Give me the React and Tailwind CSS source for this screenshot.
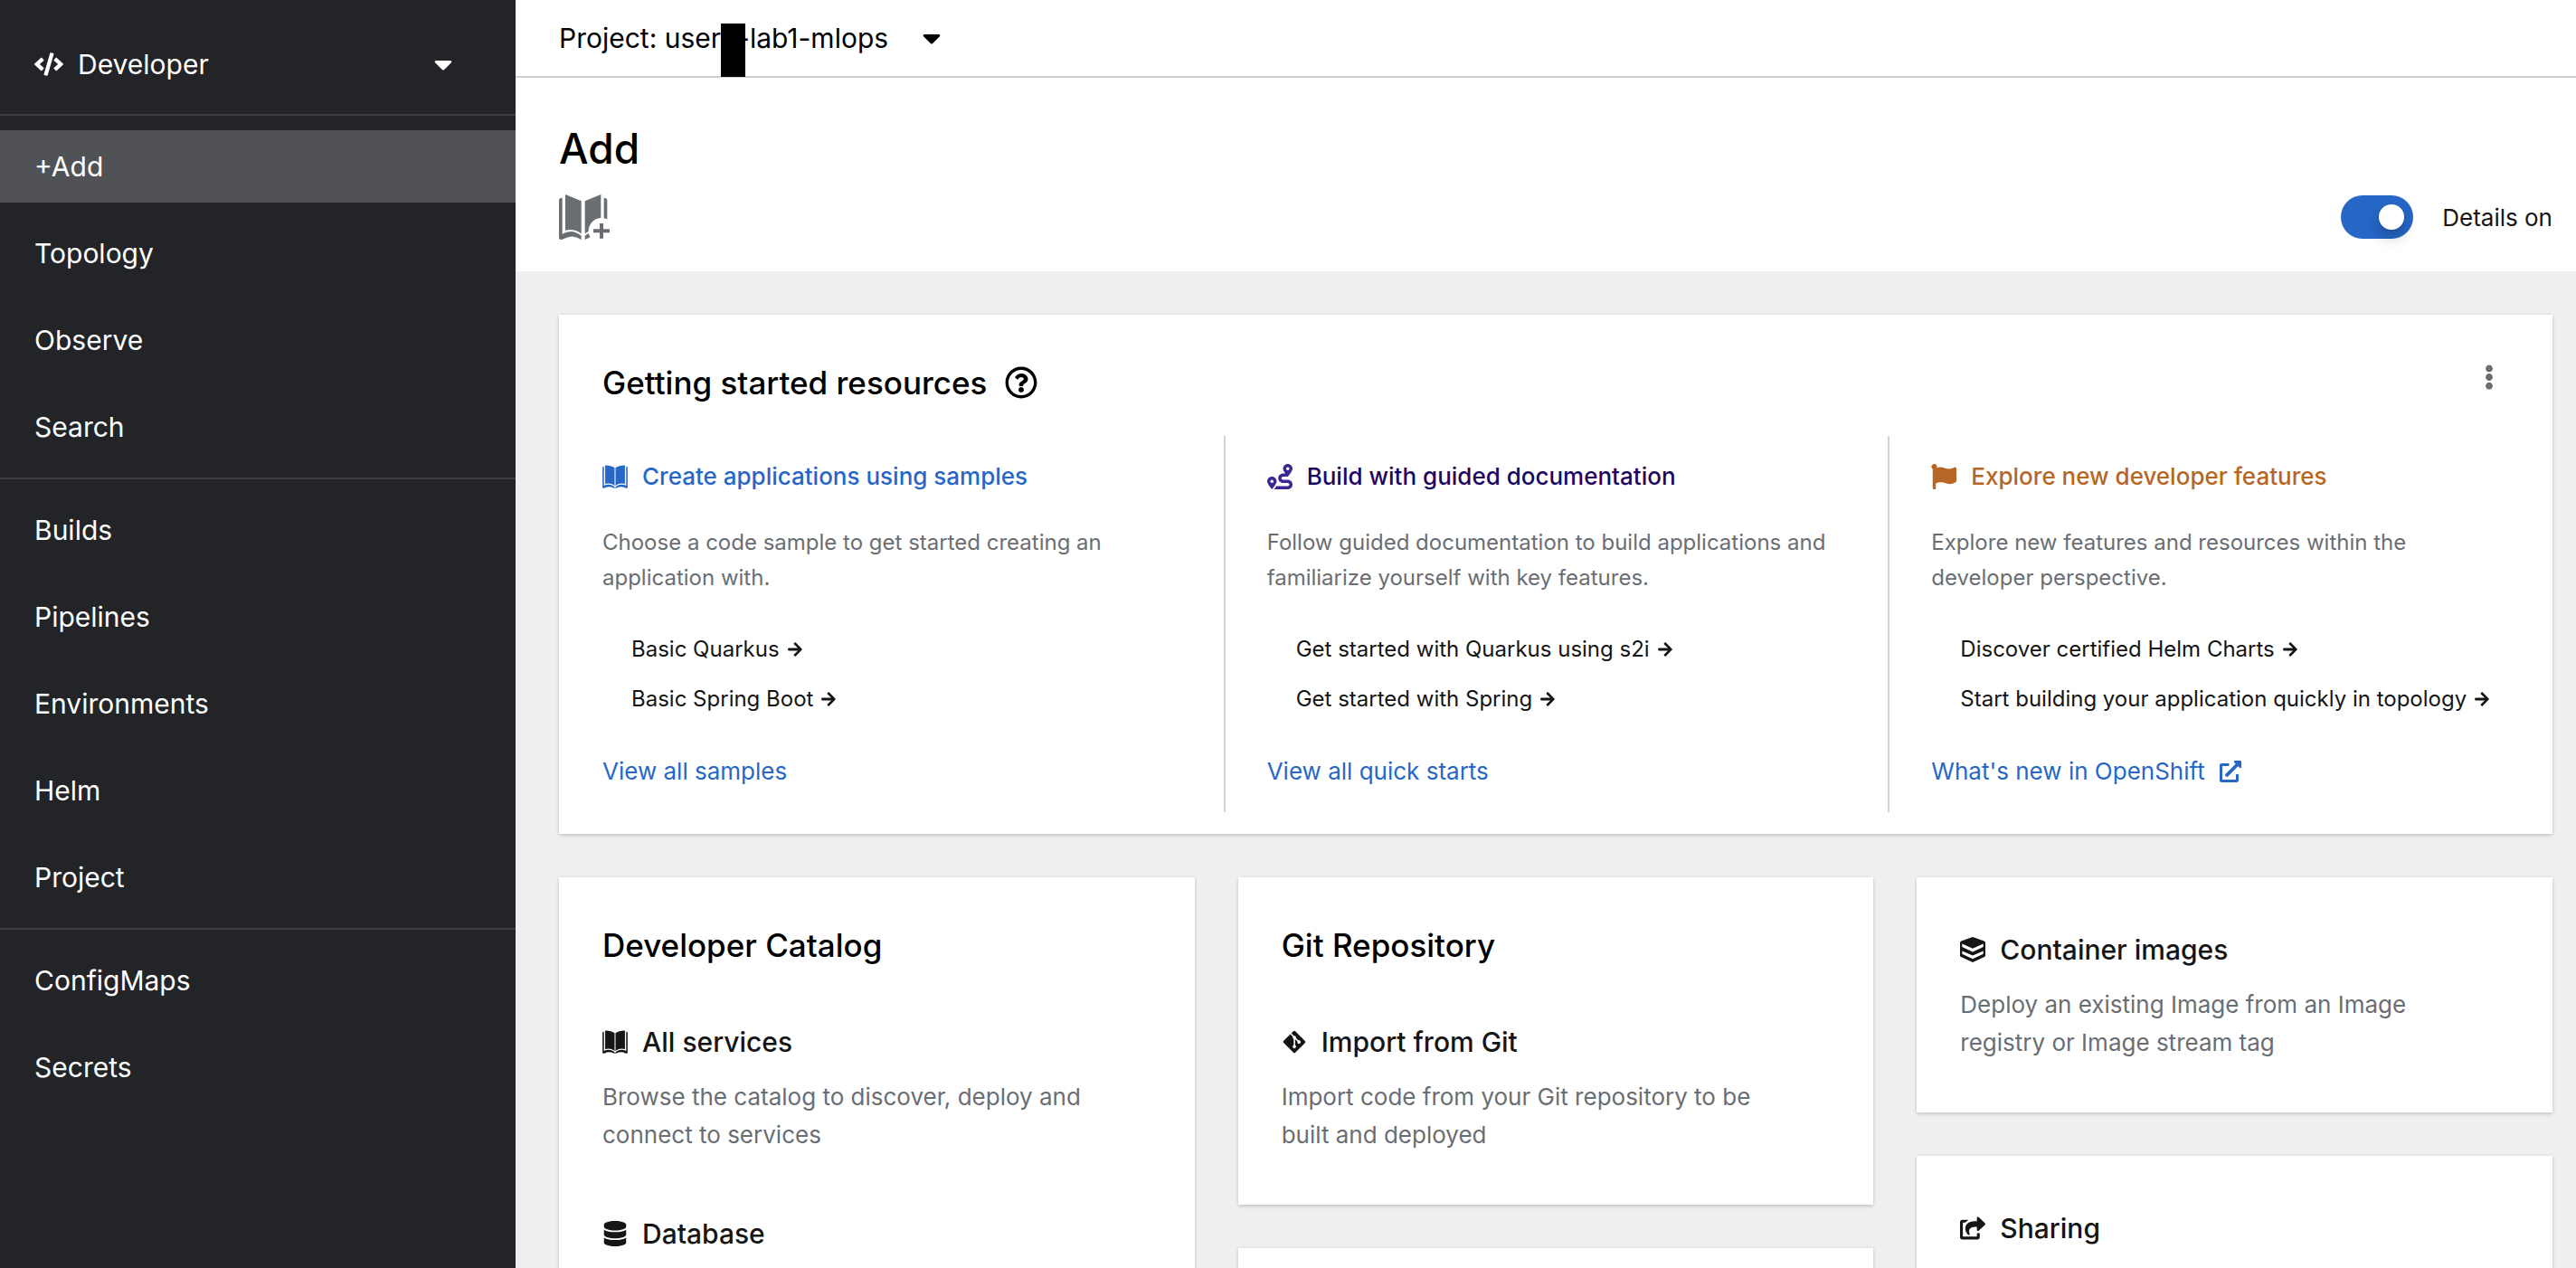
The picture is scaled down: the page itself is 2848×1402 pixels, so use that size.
import React, { useState } from "react";
import {
  FaCode,
  FaCaretDown,
  FaRoute,
  FaFlag,
  FaDatabase,
  FaGitAlt,
  FaShareSquare,
  FaEllipsisV,
  FaArrowRight,
  FaExternalLinkAlt,
  FaRegQuestionCircle,
} from "react-icons/fa";

const BOOK_PAGE = "M21 0 L74 22 V130 Q52 112 21 119 Z";
const BOOK_COVER = "M0 18 Q1 12 11 11 V131 Q44 112 74 137 V150 Q46 130 16 147 Q5 153 0 146 Z";
const SMALL_PAGE = "M17 3 Q50 0 77 18 V132 Q50 112 17 121 Z";
const SMALL_COVER = "M0 16 Q1 10 9 10 V133 Q44 116 77 140 V150 Q46 130 14 147 Q4 152 0 146 Z";

function CatalogIcon({ className }) {
  return (
    <svg viewBox="0 0 160 150" fill="currentColor" className={className} aria-hidden="true">
      <path d={SMALL_PAGE} />
      <path d={SMALL_COVER} />
      <g transform="matrix(-1 0 0 1 160 0)">
        <path d={SMALL_PAGE} />
        <path d={SMALL_COVER} />
      </g>
    </svg>
  );
}

function CatalogAddIcon({ className }) {
  return (
    <svg viewBox="0 0 168 150" fill="currentColor" className={className} aria-hidden="true">
      <mask id="plus-cutout">
        <rect width="168" height="150" fill="white" />
        <circle cx="141" cy="121" r="43" fill="black" />
      </mask>
      <g mask="url(#plus-cutout)">
        <path d={BOOK_PAGE} />
        <path d={BOOK_COVER} />
        <g transform="matrix(-1 0 0 1 160 0)">
          <path d={BOOK_PAGE} />
          <path d={BOOK_COVER} />
        </g>
      </g>
      <path d="M135 96h12v19h21v12h-21v19h-12v-19h-21v-12h21z" />
    </svg>
  );
}

function LayersIcon({ className }) {
  return (
    <svg viewBox="0 0 28 28" className={className} aria-hidden="true">
      <path
        fill="currentColor"
        d="M14 0 L26.6 4.6 Q28 5.2 28 6.6 V20.4 Q28 21.4 27 22 L14 28 L1 22 Q0 21.4 0 20.4 V6.6 Q0 5.2 1.4 4.6 Z"
      />
      <path fill="white" d="M2.3 7.6 L14 12.8 L25.7 7.6 V11 L14 16.4 L2.3 11 Z" />
      <path fill="white" d="M2.3 15.4 L14 20.6 L25.7 15.4 V18.8 L14 24.2 L2.3 18.8 Z" />
    </svg>
  );
}

const NAV_GROUPS = [
  ["+Add", "Topology", "Observe", "Search"],
  ["Builds", "Pipelines", "Environments", "Helm", "Project"],
  ["ConfigMaps", "Secrets"],
];

function Sidebar() {
  return (
    <aside className="w-[570px] shrink-0 bg-[#232428] text-[30px] text-white">
      <button
        type="button"
        className="flex h-32 w-full items-center border-b-2 border-[#3c3d42] pt-4 pr-[70px] pl-[38px] text-left"
      >
        <FaCode className="h-[26px] w-8" />
        <span className="ml-4 flex-1">Developer</span>
        <FaCaretDown className="h-8 w-5" />
      </button>
      <nav className="divide-y-2 divide-[#3c3d42]">
        {NAV_GROUPS.map((group) => (
          <ul key={group[0]} className="flex flex-col gap-4 py-4">
            {group.map((item) => (
              <li key={item}>
                <a
                  href="#"
                  className={
                    item === "+Add"
                      ? "flex h-20 items-center bg-[#515256] pl-[38px]"
                      : "flex h-20 items-center pl-[38px]"
                  }
                >
                  {item}
                </a>
              </li>
            ))}
          </ul>
        ))}
      </nav>
    </aside>
  );
}

function ProjectBar() {
  return (
    <div className="border-b-2 border-[#d2d2d2] bg-white pl-12">
      <button type="button" className="flex h-[84px] items-center text-[30px] text-black">
        <span>Project: user</span>
        <span className="relative h-full w-[18px]">
          <span className="absolute top-[26px] left-0 h-[59px] w-[27px] bg-black" />
        </span>
        <span>-lab1-mlops</span>
        <FaCaretDown className="ml-[38px] h-8 w-5" />
      </button>
    </div>
  );
}

function PageHeader() {
  const [details, setDetails] = useState(true);
  return (
    <header className="bg-white pt-12 pr-[26px] pb-[34px] pl-12">
      <h1 className="text-[46px] leading-[60px] font-medium text-black">Add</h1>
      <div className="mt-5 flex h-[52px] items-center justify-between">
        <CatalogAddIcon className="h-[50px] w-14 text-[#6a6e73]" />
        <label className="flex items-center gap-8 text-[26px] text-[#151515]">
          <input
            type="checkbox"
            role="switch"
            checked={details}
            onChange={(e) => setDetails(e.target.checked)}
            className="flex h-12 w-20 appearance-none items-center rounded-full bg-[#8a8d90] px-[10px] before:size-7 before:rounded-full before:bg-white before:shadow-[0_8px_16px_rgba(0,0,0,0.25)] checked:justify-end checked:bg-[#2667c7]"
          />
          Details on
        </label>
      </div>
    </header>
  );
}

const RESOURCES = [
  {
    title: "Create applications using samples",
    icon: <CatalogIcon className="h-[26px] w-7" />,
    iconColor: "text-[#2667c7]",
    titleColor: "text-[#2667c7]",
    text: "Choose a code sample to get started creating an application with.",
    links: ["Basic Quarkus", "Basic Spring Boot"],
    more: "View all samples",
  },
  {
    title: "Build with guided documentation",
    icon: <FaRoute className="size-7" />,
    iconColor: "text-[#3d2595]",
    titleColor: "text-[#1b0763]",
    text: "Follow guided documentation to build applications and familiarize yourself with key features.",
    links: ["Get started with Quarkus using s2i", "Get started with Spring"],
    more: "View all quick starts",
  },
  {
    title: "Explore new developer features",
    icon: <FaFlag className="size-7" />,
    iconColor: "text-[#b76625]",
    titleColor: "text-[#b76625]",
    text: "Explore new features and resources within the developer perspective.",
    links: ["Discover certified Helm Charts", "Start building your application quickly in topology"],
    more: "What's new in OpenShift",
    external: true,
  },
];

const CARD = "bg-white shadow-[0_2px_4px_rgba(3,3,3,0.14),0_0_4px_rgba(3,3,3,0.08)]";

function GettingStarted() {
  return (
    <section className={CARD}>
      <div className="flex items-center pt-12 pr-14 pl-12">
        <h2 className="text-[35px] leading-[54px] font-medium text-black">Getting started resources</h2>
        <button type="button" aria-label="About these resources" className="ml-5 text-black">
          <FaRegQuestionCircle className="size-9" />
        </button>
        <button
          type="button"
          aria-label="Actions"
          className="ml-auto flex h-[42px] w-7 items-center justify-center self-start text-[#6a6e73]"
        >
          <FaEllipsisV className="size-7" />
        </button>
      </div>
      <div className="mt-8 grid grid-cols-3 pb-6">
        {RESOURCES.map((r) => (
          <div
            key={r.title}
            className="border-l-2 border-[#d2d2d2] py-6 pr-14 pl-[46px] first:border-transparent"
          >
            <h3 className={`flex items-center gap-4 text-[26px] leading-[42px] font-medium ${r.titleColor}`}>
              <span className={r.iconColor}>{r.icon}</span>
              {r.title}
            </h3>
            <p className="mt-8 text-2xl leading-[39px] text-[#6a6e73]">{r.text}</p>
            <ul className="mt-10 flex flex-col gap-4 pl-8 text-2xl leading-[39px] whitespace-nowrap text-[#151515]">
              {r.links.map((l) => (
                <li key={l}>
                  <a href="#" className="flex items-center gap-2">
                    {l}
                    <FaArrowRight className="size-[18px]" />
                  </a>
                </li>
              ))}
            </ul>
            <a href="#" className="mt-10 inline-flex items-center gap-4 text-[26px] leading-[42px] text-[#2667c7]">
              {r.more}
              {r.external && <FaExternalLinkAlt className="size-6" />}
            </a>
          </div>
        ))}
      </div>
    </section>
  );
}

function CardTitle({ children }) {
  return <h2 className="py-6 text-[35px] leading-[54px] font-medium text-black">{children}</h2>;
}

function CardItem({ icon, title, children }) {
  return (
    <div className="py-8">
      <h3>
        <a href="#" className="flex items-center gap-4 text-[30px] leading-[48px] font-medium text-[#151515]">
          <span className="flex w-7 justify-center">{icon}</span>
          {title}
        </a>
      </h3>
      {children && <p className="mt-4 max-w-[560px] text-[26px] leading-[42px] text-[#6a6e73]">{children}</p>}
    </div>
  );
}

export default function App() {
  return (
    <div className="flex h-screen overflow-hidden font-['Inter',sans-serif]">
      <Sidebar />
      <main className="flex min-w-0 flex-1 flex-col bg-[#efefef]">
        <ProjectBar />
        <div className="min-h-0 flex-1 overflow-y-auto [scrollbar-width:none]">
          <PageHeader />
          <div className="flex flex-col gap-12 py-12 pr-[26px] pl-12">
            <GettingStarted />
            <div className="grid grid-cols-3 items-start gap-12">
              <section className={`${CARD} px-12 py-6`}>
                <CardTitle>Developer Catalog</CardTitle>
                <CardItem icon={<CatalogIcon className="h-[26px] w-7" />} title="All services">
                  Browse the catalog to discover, deploy and connect to services
                </CardItem>
                <CardItem icon={<FaDatabase className="size-7" />} title="Database" />
              </section>
              <div className="flex flex-col gap-12">
                <section className={`${CARD} px-12 py-6`}>
                  <CardTitle>Git Repository</CardTitle>
                  <CardItem icon={<FaGitAlt className="size-7" />} title="Import from Git">
                    Import code from your Git repository to be built and deployed
                  </CardItem>
                </section>
                <section className={`${CARD} h-40`} />
              </div>
              <div className="flex flex-col gap-12">
                <section className={`${CARD} px-12 py-6`}>
                  <CardItem icon={<LayersIcon className="size-7" />} title="Container images">
                    Deploy an existing Image from an Image registry or Image stream tag
                  </CardItem>
                </section>
                <section className={`${CARD} px-12 py-6`}>
                  <CardItem icon={<FaShareSquare className="size-7" />} title="Sharing" />
                </section>
              </div>
            </div>
          </div>
        </div>
      </main>
    </div>
  );
}
